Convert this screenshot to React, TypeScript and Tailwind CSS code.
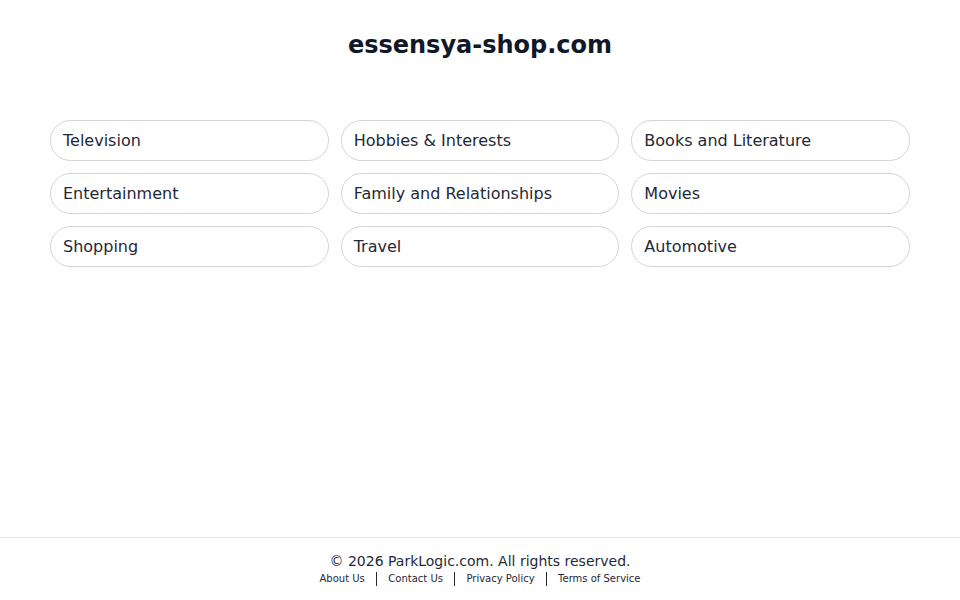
const categories = [
  'Television',
  'Hobbies & Interests',
  'Books and Literature',
  'Entertainment',
  'Family and Relationships',
  'Movies',
  'Shopping',
  'Travel',
  'Automotive',
]

const links = ['About Us', 'Contact Us', 'Privacy Policy', 'Terms of Service']

export default function App() {
  return (
    <div className="flex h-screen flex-col bg-white font-['DejaVu_Sans',sans-serif] text-[#111827]">
      <main className="flex-1">
        <h1 className="pt-[29px] text-center text-2xl leading-8 font-bold">essensya-shop.com</h1>
        <div className="mx-[50px] mt-[59px] grid grid-cols-3 gap-x-3 gap-y-3">
          {categories.map((c) => (
            <a
              key={c}
              href="#"
              className="flex h-[41px] items-center rounded-full border border-[#d4d4d8] px-3 text-base text-[#1f2937]"
            >
              {c}
            </a>
          ))}
        </div>
      </main>
      <footer className="border-t border-[#e5e7eb] pt-[13px] pb-[13px] text-center">
        <p className="text-sm leading-5 text-[#1f2937]">© 2026 ParkLogic.com. All rights reserved.</p>
        <div className="flex items-center justify-center text-[10px] leading-4 text-[#1f2937]">
          {links.map((l, i) => (
            <span key={l} className="flex items-center">
              {i > 0 && <span className="mx-[11px] h-[14px] w-[1.5px] bg-[#1f2937]" />}
              <a href="#">{l}</a>
            </span>
          ))}
        </div>
      </footer>
    </div>
  )
}
